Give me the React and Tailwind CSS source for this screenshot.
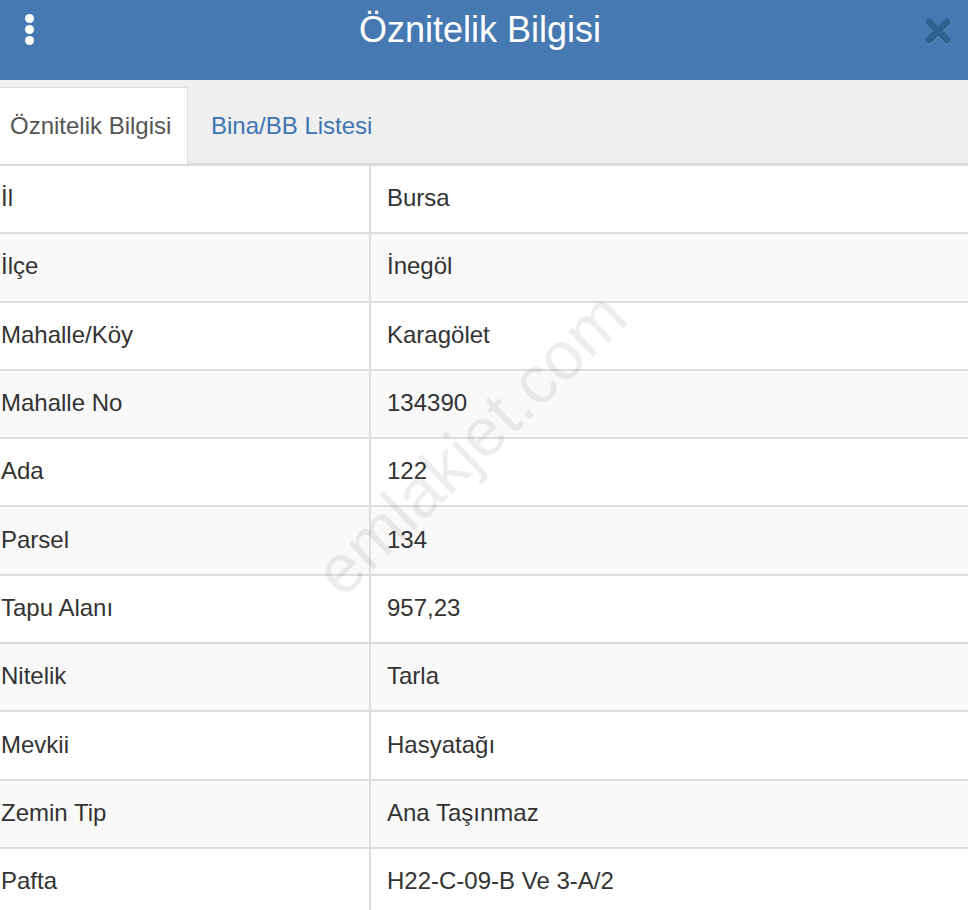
import React from "react";

const rows = [
  ["İl", "Bursa"],
  ["İlçe", "İnegöl"],
  ["Mahalle/Köy", "Karagölet"],
  ["Mahalle No", "134390"],
  ["Ada", "122"],
  ["Parsel", "134"],
  ["Tapu Alanı", "957,23"],
  ["Nitelik", "Tarla"],
  ["Mevkii", "Hasyatağı"],
  ["Zemin Tip", "Ana Taşınmaz"],
  ["Pafta", "H22-C-09-B Ve 3-A/2"],
];

const font = { fontFamily: '"Liberation Sans", Arial, sans-serif' };

export default function App() {
  return (
    <div className="relative w-[968px] h-[910px] overflow-hidden bg-white text-[#333]" style={font}>
      {/* header */}
      <div className="h-[80px] bg-[#4679b1] flex items-start justify-between px-[24px] pt-[9px]">
        <div className="flex flex-col gap-[2px] pt-[5px] pl-[1px]">
          <span className="w-[9px] h-[9px] rounded-full bg-white" />
          <span className="w-[9px] h-[9px] rounded-full bg-white" />
          <span className="w-[9px] h-[9px] rounded-full bg-white" />
        </div>
        <h1 className="text-[36px] leading-[42px] text-white ml-[2px]">Öznitelik Bilgisi</h1>
        <svg width="28" height="28" viewBox="0 0 28 28" className="mt-[8px] mr-[-8px]">
          <path d="M5 5 L23 23 M23 5 L5 23" stroke="#7fa6cf" strokeWidth="7" strokeLinecap="round" transform="translate(0 1)" opacity="0.6" />
          <path d="M5 5 L23 23 M23 5 L5 23" stroke="#30608f" strokeWidth="7" strokeLinecap="round" />
        </svg>
      </div>

      {/* tabs */}
      <div className="h-[86px] bg-[#efefef] border-b-[3px] border-[#dcdcdc] pt-[7px] flex">
        <div className="h-[77px] w-[188px] bg-white border-r border-t border-[#dddddd] flex items-center pl-[10px] text-[24px] text-[#555]">
          Öznitelik Bilgisi
        </div>
        <div className="h-[77px] flex items-center pl-[23px] text-[24px] text-[#3c76b3]">
          Bina/BB Listesi
        </div>
      </div>

      {/* attribute table */}
      <div className="flex flex-col">
        {rows.map(([k, v], i) => (
          <div
            key={k}
            className={`h-[68.3px] shrink-0 flex border-b-2 border-[#dddddd] text-[24px] ${i % 2 === 1 ? "bg-[#f9f9f9]" : "bg-white"}`}
          >
            <div className="w-[371px] border-r-2 border-[#dddddd] flex items-center pl-[1px] pb-[2px]">{k}</div>
            <div className="flex-1 flex items-center pl-[16px] pb-[2px]">{v}</div>
          </div>
        ))}
      </div>

      {/* watermark */}
      <div className="pointer-events-none absolute left-[250px] top-[392px] w-[440px] text-center text-[68px] text-black/[0.07] -rotate-[44deg]">
        emlakjet.com
      </div>
    </div>
  );
}
